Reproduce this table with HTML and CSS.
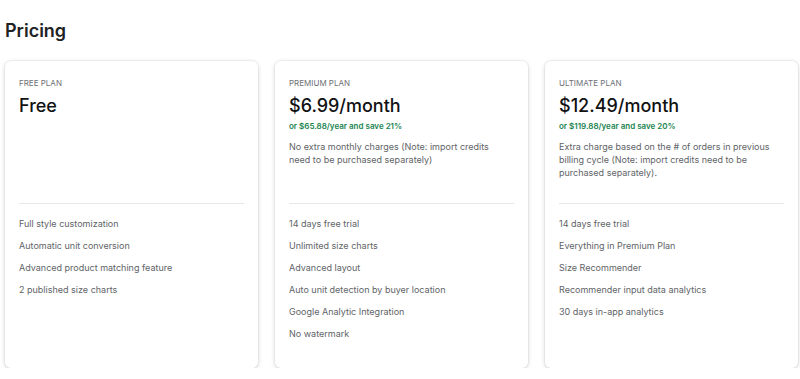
FILE: index.html
```html
<!DOCTYPE html>
<html lang="en">

<head>
    <meta charset="UTF-8">
    <meta name="viewport" content="width=device-width, initial-scale=1.0">
    <title>Pricing</title>
    <link rel="stylesheet" href="styles.css">
</head>

<body>
    <h1 class="page-title">Pricing</h1>

    <div class="plans">
        <div class="plan">
            <div class="plan-head">
                <div class="plan-name">Free plan</div>
                <div class="plan-price">Free</div>
            </div>
            <ul class="features">
                <li>Full style customization</li>
                <li>Automatic unit conversion</li>
                <li>Advanced product matching feature</li>
                <li>2 published size charts</li>
            </ul>
        </div>

        <div class="plan">
            <div class="plan-head">
                <div class="plan-name">Premium plan</div>
                <div class="plan-price">$6.99/month</div>
                <div class="plan-save">or $65.88/year and save 21%</div>
                <div class="plan-note">No extra monthly charges (Note: import credits need to be purchased separately)</div>
            </div>
            <ul class="features">
                <li>14 days free trial</li>
                <li>Unlimited size charts</li>
                <li>Advanced layout</li>
                <li>Auto unit detection by buyer location</li>
                <li>Google Analytic Integration</li>
                <li>No watermark</li>
            </ul>
        </div>

        <div class="plan">
            <div class="plan-head">
                <div class="plan-name">Ultimate plan</div>
                <div class="plan-price">$12.49/month</div>
                <div class="plan-save">or $119.88/year and save 20%</div>
                <div class="plan-note">Extra charge based on the # of orders in previous billing cycle (Note: import credits need to be purchased separately).</div>
            </div>
            <ul class="features">
                <li>14 days free trial</li>
                <li>Everything in Premium Plan</li>
                <li>Size Recommender</li>
                <li>Recommender input data analytics</li>
                <li>30 days in-app analytics</li>
            </ul>
        </div>
    </div>
</body>

</html>
```

FILE: styles.css
```css
body {
    margin: 0;
    padding: 0 2px 0 5px;
    background-color: #fff;
    font-family: Inter, "Noto Sans", sans-serif;
    color: #202223;
}

.page-title {
    margin: 0;
    padding-top: 19px;
    height: 61px;
    box-sizing: border-box;
    font-size: 18px;
    line-height: 24px;
    font-weight: 600;
}

/* ------------------Plan cards------------------- */
.plans {
    display: grid;
    grid-template-columns: repeat(3, 253px);
    column-gap: 17px;
}

.plan {
    display: flex;
    flex-direction: column;
    height: 307px;
    box-sizing: border-box;
    padding: 16px 14px;
    border-radius: 6px;
    background-color: #fff;
    box-shadow: 0 0 0 1px rgba(63, 63, 68, 0.04), 0 1px 4px 0 rgba(63, 63, 68, 0.22);
}

.plan-head {
    height: 126px;
    border-bottom: 1px solid #e6e7e9;
}

.plan-name {
    font-size: 8px;
    line-height: 12px;
    text-transform: uppercase;
    color: #6d7175;
}

.plan-price {
    margin-top: 5px;
    font-size: 18px;
    line-height: 24px;
    font-weight: 500;
    color: #111213;
}

.plan-save {
    margin-top: 2px;
    font-size: 8px;
    line-height: 12px;
    font-weight: 600;
    color: #20844f;
}

.plan-note {
    margin-top: 8px;
    padding-right: 6px;
    font-size: 9px;
    line-height: 13px;
    color: #616467;
}

.features {
    list-style: none;
    margin: 0;
    padding: 13px 0 0;
}

.features li {
    font-size: 9px;
    line-height: 13px;
    color: #616467;
    margin-bottom: 9px;
}
```
